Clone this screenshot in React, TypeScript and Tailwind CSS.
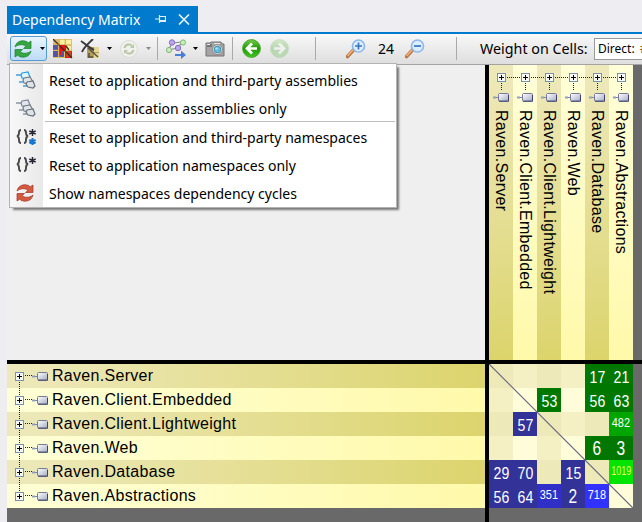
import React from "react";

const names = [
  "Raven.Server",
  "Raven.Client.Embedded",
  "Raven.Client.Lightweight",
  "Raven.Web",
  "Raven.Database",
  "Raven.Abstractions",
];

const weights: (number | null)[][] = [
  [null, null, null, null, 17, 21],
  [null, null, 53, null, 56, 63],
  [null, 57, null, null, null, 482],
  [null, null, null, null, 6, 3],
  [29, 70, null, 15, null, 1019],
  [56, 64, 351, 2, 718, null],
];

const uiFont = "font-['Noto_Sans','Open_Sans',sans-serif]";
const matrixFont = "font-['Liberation_Sans',Arial,sans-serif]";

function cellColor(row: number, col: number, value: number | null) {
  if (value === null) {
    if (row % 2 === 0 && col % 2 === 0) return "bg-[#ede9b9]";
    if (row % 2 === 1 && col % 2 === 1) return "bg-[#fffcda]";
    return "bg-[#f5f0c4]";
  }
  if (col > row) {
    if (value > 1000) return "bg-[#00e400]";
    if (value > 400) return "bg-[#00a600]";
    return "bg-[#007800]";
  }
  if (value > 700) return "bg-[#3232ff]";
  if (value > 300) return "bg-[#3030c8]";
  return "bg-[#323298]";
}

function digitStyle(value: number) {
  if (value > 999) return "text-[12px] scale-x-[0.75] -translate-y-px text-[#e8f860]";
  if (value > 99) return "text-[13px] scale-x-[0.84] -translate-y-px";
  if (value > 9) return "text-[17px] scale-x-[0.83] translate-y-[2px]";
  return "text-[21px] scale-x-[0.74]";
}

function Caret({ className }: { className: string }) {
  return (
    <svg className={"shrink-0 " + className} width="5" height="3" viewBox="0 0 5 3">
      <path d="M0 0h5L2.5 3z" fill="currentColor" />
    </svg>
  );
}

function Divider({ className }: { className: string }) {
  return <div className={"h-[23px] w-px shrink-0 bg-[#a9a9a9] " + className} />;
}

function Cycle({ light, dark, size }: { light: string; dark: string; size: number }) {
  return (
    <svg width={size} height={size} viewBox="0 0 18 18">
      <path d="M1 7C2 2.5 5.500 .8 9 .8c2.500 0 4 .8 5.300 2L17 1v7.500H9.500l2.300-2.300C9.500 4.200 4.500 4 1 7z" fill={light} stroke={dark} strokeWidth=".7" />
      <path d="M17 11c-1 4.500-4.500 6.200-8 6.200-2.500 0-4-.8-5.300-2L1 17V9.500h7.500l-2.300 2.300C8.500 13.800 13.500 14 17 11z" fill={light} stroke={dark} strokeWidth=".7" />
    </svg>
  );
}

function MatrixIcon() {
  return (
    <svg className="ml-1.5 shrink-0" width="20" height="20" viewBox="0 0 20 20">
      <rect width="19" height="19" fill="#dfc36c" />
      <path d="M0 6h5v5H0zM0 12h5v6H0zM6 12h5v6H6z" fill="#5455a8" />
      <path d="M7 1h5v4H7zM13 1h5v4h-5zM14 7h4v4h-4z" fill="#ffef9f" />
      <path d="M0 0h5v5H0z" fill="#e9b46d" />
      <path d="M6 6h7v6H6zM6 6h2v10H6zM12 12h7v7h-7z" fill="#ef1010" />
      <path d="M13 13h5v5h-5z" fill="#ca4325" />
      <path d="m13 7 3 4M0 0l19 19" stroke="#3b2b23" strokeWidth="1.300" />
      <path d="M6 0v19M12 0v6M0 5h6M0 11h6M12 12h7" stroke="#b99a4b" strokeWidth=".5" />
    </svg>
  );
}

function ClearIcon() {
  return (
    <svg className="ml-[7px] shrink-0" width="20" height="20" viewBox="0 0 20 20">
      <path d="M7 8h12v11H7z" fill="#b59e55" />
      <path d="M14 8h5v5h-5zM14 14h5v5h-5z" fill="#e5d796" />
      <path d="m8 9 10 9M9 14v4M8 18h5" stroke="#55504a" strokeWidth="1.500" />
      <path d="M1 2c4 3 9 7 13 9M13 0C9 4 4 8 2 13" fill="none" stroke="#393939" strokeWidth="2" />
    </svg>
  );
}

function DisabledCycle() {
  return (
    <svg className="ml-2 shrink-0" width="18" height="18" viewBox="0 0 18 18">
      <circle cx="9" cy="9" r="8.500" fill="#f0f1ec" stroke="#d9dcd7" />
      <path d="M4.500 8C5.500 4 10 3.500 12 6M13.500 10c-1 4-5.500 4.500-7.500 2" fill="none" stroke="#b6c8a7" strokeWidth="2" />
      <path d="M14 4v4h-4zM4 14v-4h4z" fill="#b6c8a7" />
    </svg>
  );
}

function GraphIcon() {
  return (
    <svg className="ml-2 shrink-0" width="21" height="20" viewBox="0 0 21 20">
      <path d="M3 10 6 4l11-1-6 6-8 2" fill="none" stroke="#8c8b98" strokeWidth="1.200" />
      <g strokeWidth="1">
        <circle cx="6" cy="3.500" r="2.700" fill="#b9a7ec" stroke="#876dc0" />
        <circle cx="17" cy="3.500" r="2.600" fill="#cbedbb" stroke="#79b976" />
        <circle cx="3" cy="11" r="2.600" fill="#cbedbb" stroke="#79b976" />
        <circle cx="12" cy="9" r="2.700" fill="#b9a7ec" stroke="#876dc0" />
      </g>
      <path d="M9 15h6v-3.500l5 4.500-5 4v-3H9z" fill="#477ed7" />
    </svg>
  );
}

function Camera() {
  return (
    <svg className="ml-[7px] shrink-0" width="20" height="16" viewBox="0 0 20 16">
      <path d="M1 2h4l1-1h10l1 2h2v12H1z" fill="#a4a4a4" stroke="#737373" />
      <path d="M2 3h5v3H2z" fill="#777" />
      <path d="M2 3.500h3M9 2.500h6" stroke="#e9e9e9" />
      <circle cx="12.500" cy="8.500" r="5" fill="#ddd" stroke="#898989" />
      <circle cx="12.500" cy="8.500" r="3.300" fill="#64bfe8" stroke="#438dac" />
      <circle cx="11.500" cy="7.500" r="1.100" fill="#bdedff" />
    </svg>
  );
}

function NavIcon({ forward = false }: { forward?: boolean }) {
  return (
    <svg className={"ml-[9px] shrink-0 " + (forward ? "-scale-x-100 opacity-25" : "")} width="19" height="19" viewBox="0 0 19 19">
      <defs>
        <linearGradient id={forward ? "nav-forward" : "nav-back"} x2="0" y2="1">
          <stop stopColor="#74ca4b" />
          <stop offset=".5" stopColor="#229909" />
          <stop offset="1" stopColor="#43c526" />
        </linearGradient>
      </defs>
      <circle cx="9.500" cy="9.500" r="8.900" fill={forward ? "url(#nav-forward)" : "url(#nav-back)"} stroke="#45a929" />
      <path d="M10 4.500 5 9.500l5 5M5.500 9.500H15" fill="none" stroke="white" strokeWidth="2.700" />
    </svg>
  );
}

function ZoomGlass({ plus = false, className }: { plus?: boolean; className: string }) {
  return (
    <svg className={"shrink-0 " + className} width="20" height="20" viewBox="0 0 20 20">
      <path d="m7.500 11-6 6.500" stroke="#b97443" strokeWidth="3.600" strokeLinecap="round" />
      <path d="m7 11-5.500 6" stroke="#f0b37c" strokeWidth="1.700" />
      <circle cx="12.500" cy="7" r="6" fill="#dcefff" stroke="#8fb9ec" strokeWidth="1.700" />
      <path d={plus ? "M9 7h7M12.500 3.500v7" : "M9 7h7"} stroke="#3972c1" strokeWidth="1.700" />
    </svg>
  );
}

function Toolbar() {
  return (
    <div className="flex h-[31px] items-center overflow-hidden border-b border-[#a3a3a3] bg-linear-to-b from-[#f8f8f8] to-[#dedede] pb-px">
      <div className="ml-[3px] flex h-[25px] w-[37px] shrink-0 items-center rounded-[3px] border border-[#559ad5] bg-linear-to-b from-[#eaf4fc] to-[#bcdcf4] pl-[3px]">
        <Cycle light="#35a641" dark="#16822e" size={18} />
        <Caret className="ml-2 text-black" />
      </div>
      <MatrixIcon />
      <ClearIcon />
      <Caret className="ml-[7px] text-black" />
      <DisabledCycle />
      <Caret className="ml-2 text-[#898989]" />
      <Divider className="ml-1.5" />
      <GraphIcon />
      <Caret className="ml-1.5 text-black" />
      <Camera />
      <Divider className="ml-[7px]" />
      <NavIcon />
      <NavIcon forward />
      <Divider className="ml-[26px]" />
      <ZoomGlass plus className="ml-[30px]" />
      <span className="ml-3 w-[17px] shrink-0 text-[14px]">24</span>
      <ZoomGlass className="ml-[10px]" />
      <Divider className="ml-[31px]" />
      <span className="ml-[23px] w-[107px] shrink-0 text-[14.300px] whitespace-nowrap">Weight on Cells:</span>
      <div className="ml-[7px] flex h-[22px] w-[80px] shrink-0 items-center border border-[#999] bg-white pl-[3px] text-[12px] whitespace-nowrap">
        Direct: <span className="ml-[5px] text-[#9c6500]">#</span>
      </div>
    </div>
  );
}

function Assemblies({ accent = false }: { accent?: boolean }) {
  return (
    <svg width="20" height="18" viewBox="0 0 20 18">
      <path d="M0 4h5M3 11h4M7 15h4" stroke={accent ? "#479fd6" : "#8c95a6"} strokeWidth="1.600" />
      <g strokeWidth="1.200">
        <path d="m6 2 6-1 2 5-2 2-6-1-1-3z" fill={accent ? "#e0f5ff" : "#e3e5ed"} stroke={accent ? "#219ee4" : "#7c849b"} />
        <path d="m8 7 6-1 3 5-3 2-6-1-1-3z" fill="#e0e5e8" stroke="#727d88" />
        <path d="m11 11 6-1 2 5-2 2-5-1-2-3z" fill="#e0e3e6" stroke="#65717b" />
      </g>
    </svg>
  );
}

function Namespaces({ all = false }: { all?: boolean }) {
  return (
    <svg width="20" height="18" viewBox="0 0 20 18">
      <path d="M5 2c-4 0 0 5-4 6 4 1 0 7 4 7M8 2c4 0 0 5 4 6-4 1 0 7-4 7" fill="none" stroke="#484848" strokeWidth="1.900" />
      <path d="M16.500 1v7M13.300 3l6.400 3M19.700 3l-6.400 3" stroke="#262633" strokeWidth="1.500" />
      {all && <path d="M16.500 10v7M13.300 12l6.400 3M19.700 12l-6.400 3" stroke="#1677ce" strokeWidth="2.100" />}
    </svg>
  );
}

const menuItems = [
  { label: "Reset to application and third-party assemblies", icon: <Assemblies accent /> },
  { label: "Reset to application assemblies only", icon: <Assemblies /> },
  { label: "Reset to application and third-party namespaces", icon: <Namespaces all /> },
  { label: "Reset to application namespaces only", icon: <Namespaces /> },
  { label: "Show namespaces dependency cycles", icon: <Cycle light="#d35a3e" dark="#9f3328" size={18} /> },
];

function ResetMenu() {
  return (
    <div className="absolute top-[63px] left-[9px] z-10 w-[388px] border border-[#b3b3b3] bg-white bg-linear-to-r from-[#f8f8f8] to-[#e9e9e9] bg-[length:33px_100%] bg-no-repeat py-px shadow-[3px_3px_2px_-1px_#777]">
      {menuItems.map((item, index) => (
        <div key={item.label}>
          {index === 2 && <div className="ml-[35px] mr-[1px] h-px bg-[#bdbdbd]" />}
          <div className="flex h-7 items-center pt-0.5 text-[14px] whitespace-nowrap">
            <span className="ml-1.5 flex w-[33px] shrink-0">{item.icon}</span>
            <span>{item.label}</span>
          </div>
        </div>
      ))}
    </div>
  );
}

function Expander() {
  return (
    <svg className="shrink-0" width="9" height="9" viewBox="0 0 9 9">
      <rect x=".5" y=".5" width="8" height="8" fill="#f8f8f5" stroke="#7891ad" />
      <path d="M2 4.500h5M4.500 2v5" stroke="black" />
    </svg>
  );
}

function AssemblyNode() {
  return (
    <svg className="shrink-0" width="16" height="9" viewBox="0 0 16 9">
      <defs>
        <linearGradient id="assembly-fill" x2="1" y2="1">
          <stop stopColor="#fff" />
          <stop offset="1" stopColor="#a7aec2" />
        </linearGradient>
      </defs>
      <path d="M0 3.500h3v2H0z" fill="#91a0bb" />
      <path d="M3 4.500h3" stroke="#7e86a2" />
      <rect x="5.500" y=".5" width="10" height="7.500" rx="1" fill="url(#assembly-fill)" stroke="#747d96" />
      <path d="M6 8.300h9.500V2" fill="none" stroke="#343c6a" strokeWidth=".9" />
    </svg>
  );
}

function ColumnHeader({ name, index }: { name: string; index: number }) {
  return (
    <div className={"flex h-full w-6 flex-col items-center bg-linear-to-b " + (index % 2 ? "from-[#fffed8] to-[#fff9aa]" : "from-[#eee9bb] to-[#dcd46b]")}>
      <div className="mt-2 flex h-[9px] w-full items-center">
        <svg className="shrink-0" width="8" height="9"><path d={index ? "M0 4.500h8" : ""} stroke="#222" strokeDasharray="1 1" /></svg>
        <Expander />
        <svg className="shrink-0" width="7" height="9"><path d={index < 5 ? "M1 4.500h6" : ""} stroke="#222" strokeDasharray="1 1" /></svg>
      </div>
      <svg className="mt-px shrink-0" width="24" height="8"><path d="M12.500 0v8" stroke="#222" strokeDasharray="1 1" /></svg>
      <div className="mt-[2px] flex w-full pl-1"><AssemblyNode /></div>
      <span className="mt-[8px] text-[16px] leading-6 tracking-[0.300px] whitespace-nowrap [writing-mode:vertical-rl]">{name}</span>
    </div>
  );
}

function RowHeader({ name, index }: { name: string; index: number }) {
  return (
    <div className={"flex h-6 items-center bg-linear-to-r " + (index % 2 ? "from-[#ffffd6] to-[#fff9aa]" : "from-[#eee9bb] to-[#dcd46b]")}>
      <div className="ml-2 flex h-6 w-[9px] flex-col items-center">
        <svg width="9" height="8"><path d={index ? "M4.500 0v8" : ""} stroke="#222" strokeDasharray="1 1" /></svg>
        <Expander />
        <svg width="9" height="7"><path d={index < 5 ? "M4.500 1v6" : ""} stroke="#222" strokeDasharray="1 1" /></svg>
      </div>
      <svg className="ml-px" width="7" height="2"><path d="M0 .5h7" stroke="#222" strokeDasharray="1 1" /></svg>
      <AssemblyNode />
      <span className="ml-[4px] text-[16px] leading-6 tracking-[0.300px] whitespace-nowrap">{name}</span>
    </div>
  );
}

function DependencyGrid() {
  return (
    <div className="relative grid w-36 grid-cols-6">
      {weights.flatMap((row, r) =>
        row.map((value, c) => (
          <div key={r + "-" + c} className={"flex h-6 w-6 items-center justify-center overflow-hidden text-white " + cellColor(r, c, value)}>
            {value !== null && <span className={"leading-6 " + digitStyle(value)}>{value}</span>}
          </div>
        )),
      )}
      <svg className="absolute inset-0" width="144" height="144" viewBox="0 0 144 144">
        <path d="m0 0 144 144" stroke="#62627b" strokeWidth="1.200" />
      </svg>
    </div>
  );
}

export default function App() {
  return (
    <main className={"relative flex h-[522px] w-[642px] flex-col overflow-hidden bg-[#eeeef2] pt-1.5 pl-[7px] text-black " + uiFont}>
      <div className="flex h-[26px] w-[191px] shrink-0 items-center bg-[#007acc] text-white">
        <span className="ml-[5px] w-[130px] text-[14px] whitespace-nowrap">Dependency Matrix</span>
        <svg className="ml-[13px]" width="11" height="10" viewBox="0 0 11 10">
          <path d="M0 5h4M4.500 1v8M5 2.500h5.500v5H5M5 6.500h5" fill="none" stroke="#e2f0fb" strokeWidth="1.200" />
        </svg>
        <svg className="ml-3" width="12" height="11" viewBox="0 0 12 11">
          <path d="m1 .5 10 10M11 .5l-10 10" stroke="#e2f0fb" strokeWidth="1.700" />
        </svg>
      </div>
      <div className="h-0.5 shrink-0 bg-[#007acc]" />
      <Toolbar />
      <section className={"flex h-[457px] shrink-0 bg-[#696969] " + matrixFont}>
        <div className="flex w-[478px] flex-col">
          <div className="h-[295px] shrink-0 bg-[#efefef]" />
          <div className="h-1 shrink-0 bg-black" />
          {names.map((name, index) => <RowHeader key={name} name={name} index={index} />)}
        </div>
        <div className="w-1 shrink-0 bg-black" />
        <div className="flex w-[153px] flex-col">
          <div className="flex h-[295px] shrink-0">
            {names.map((name, index) => <ColumnHeader key={name} name={name} index={index} />)}
          </div>
          <div className="h-1 shrink-0 bg-black" />
          <DependencyGrid />
        </div>
      </section>
      <ResetMenu />
    </main>
  );
}
